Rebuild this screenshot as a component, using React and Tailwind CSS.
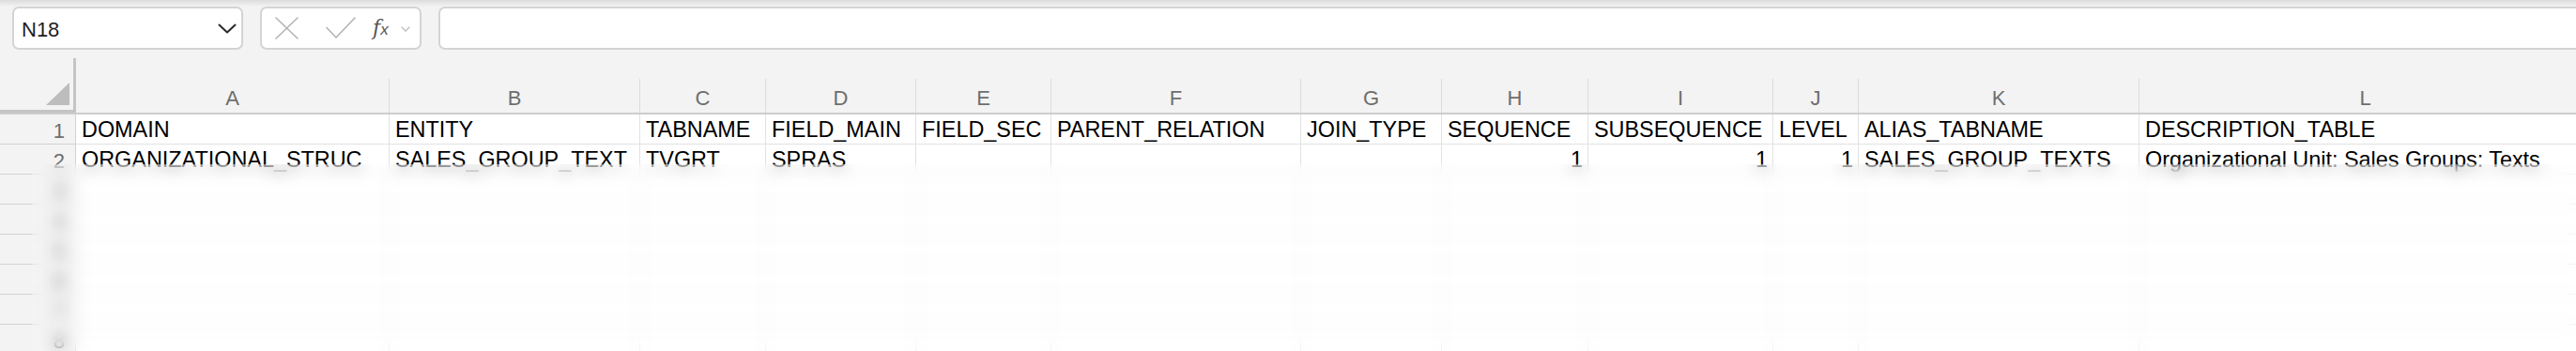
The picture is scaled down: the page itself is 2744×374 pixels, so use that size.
import React from 'react';

const font = { fontFamily: '"Liberation Sans", Arial, sans-serif' };

// column widths measured from the sheet (px, right border included)
const columns = [
    { letter: 'A', w: 'w-[334px]', head: 'DOMAIN', val: 'ORGANIZATIONAL_STRUC' },
    { letter: 'B', w: 'w-[267px]', head: 'ENTITY', val: 'SALES_GROUP_TEXT' },
    { letter: 'C', w: 'w-[134px]', head: 'TABNAME', val: 'TVGRT' },
    { letter: 'D', w: 'w-[160px]', head: 'FIELD_MAIN', val: 'SPRAS' },
    { letter: 'E', w: 'w-[144px]', head: 'FIELD_SEC', val: '' },
    { letter: 'F', w: 'w-[266px]', head: 'PARENT_RELATION', val: '' },
    { letter: 'G', w: 'w-[150px]', head: 'JOIN_TYPE', val: '' },
    { letter: 'H', w: 'w-[156px]', head: 'SEQUENCE', val: '1', num: true },
    { letter: 'I', w: 'w-[197px]', head: 'SUBSEQUENCE', val: '1', num: true },
    { letter: 'J', w: 'w-[91px]', head: 'LEVEL', val: '1', num: true },
    { letter: 'K', w: 'w-[299px]', head: 'ALIAS_TABNAME', val: 'SALES_GROUP_TEXTS' },
    { letter: 'L', w: 'w-[482px]', head: 'DESCRIPTION_TABLE', val: 'Organizational Unit: Sales Groups: Texts' },
];

const NameBox = () => (
    <div className="flex items-center w-[246px] h-[46px] shrink-0 bg-white border-2 border-[#d4d4d4] rounded-[7px] pl-[8px] pr-[5px]">
        <span className="flex-1 pt-[3px] text-[22px] leading-[22px] text-[#1f1f1f]">N18</span>
        <svg width="20" height="11" viewBox="0 0 20 11" fill="none" stroke="#2a2a2a" strokeWidth="2" strokeLinecap="round" strokeLinejoin="round">
            <path d="M1.5 1.5 L10 9.5 L18.5 1.5" />
        </svg>
    </div>
);

const FormulaButtons = () => (
    <div className="flex items-center w-[172px] h-[46px] shrink-0 bg-white border-2 border-[#d4d4d4] rounded-[7px] pl-[14px]">
        <svg width="25" height="24" viewBox="0 0 25 24" fill="none" stroke="#b4b4b4" strokeWidth="1.6" strokeLinecap="round">
            <path d="M1 1 L24 23 M24 1 L1 23" />
        </svg>
        <svg className="ml-[29px]" width="32" height="24" viewBox="0 0 32 24" fill="none" stroke="#b4b4b4" strokeWidth="1.6" strokeLinecap="round" strokeLinejoin="round">
            <path d="M1 11.5 L11 22 L31 1" />
        </svg>
        <span className="ml-[18px] pt-[2px] text-[22px] leading-[22px] text-[#555]">
            <span className="italic font-[400]" style={{ fontFamily: '"DejaVu Serif", serif' }}>f</span>
            <span className="text-[17px] italic">x</span>
        </span>
        <svg className="ml-[13px] mt-[2px]" width="10" height="6" viewBox="0 0 10 6" fill="none" stroke="#bdbdbd" strokeWidth="1.3" strokeLinecap="round">
            <path d="M1 1 L5 5 L9 1" />
        </svg>
    </div>
);

const HeaderRow = () => (
    <div className="flex h-[60px] border-b-2 border-[#cdcdcd]">
        <div className="relative w-[81px] shrink-0 border-r-[3px] border-b-[3px] border-[#c4c4c4]">
            <svg className="absolute right-[4px] bottom-[5px]" width="25" height="24" viewBox="0 0 25 24">
                <path d="M0 24 L25 24 L25 0 Z" fill="#bdbdbd" />
            </svg>
        </div>
        {columns.map(col => (
            <div key={col.letter} className={`${col.w} shrink-0 flex flex-col justify-end`}>
                <div className="h-[36px] border-r border-[#dcdcdc] pt-[10px] text-center text-[22px] leading-[22px] text-[#6e6e6e]">
                    {col.letter}
                </div>
            </div>
        ))}
    </div>
);

const Row = ({ n, cells, alignNums }) => (
    <div className="flex h-[32px]">
        <div className="w-[81px] shrink-0 bg-[#f3f3f3] border-r border-b border-[#d2d2d2] pr-[11px] pt-[7px] text-right text-[22px] leading-[22px] text-[#6e6e6e]">
            {n}
        </div>
        {columns.map((col, i) => (
            <div
                key={col.letter}
                className={`${col.w} shrink-0 overflow-hidden whitespace-nowrap bg-white border-r border-b border-[#e2e2e2] pt-[3px] text-[23.4px] leading-[26px] text-black ${alignNums && col.num ? 'text-right pr-[5px]' : 'pl-[6px]'}`}
            >
                {cells ? cells[i] : ''}
            </div>
        ))}
    </div>
);

const App = () => {
    const headers = columns.map(c => c.head);
    const values = columns.map(c => c.val);

    return (
        <div className="relative w-full h-[374px] overflow-hidden bg-[#f3f3f3]" style={font}>
            <div className="flex items-start h-[62px] pt-[7px] pl-[13px] gap-[18px] bg-[linear-gradient(to_bottom,#dcdcdc_0px,#f3f3f3_7px)]">
                <NameBox />
                <FormulaButtons />
                <div className="flex-1 h-[46px] -mr-[20px] bg-white border-2 border-[#d4d4d4] rounded-[7px]"></div>
            </div>
            <HeaderRow />
            <Row n={1} cells={headers} />
            <Row n={2} cells={values} alignNums />
            {[3, 4, 5, 6, 7, 8, 9].map(n => (
                <Row key={n} n={n} />
            ))}
            {/* privacy blur over the rest of the sheet */}
            <div className="absolute left-[34px] top-[175px] right-0 bottom-0 backdrop-blur-[8px] bg-white/10"></div>
        </div>
    );
};

export default App;
